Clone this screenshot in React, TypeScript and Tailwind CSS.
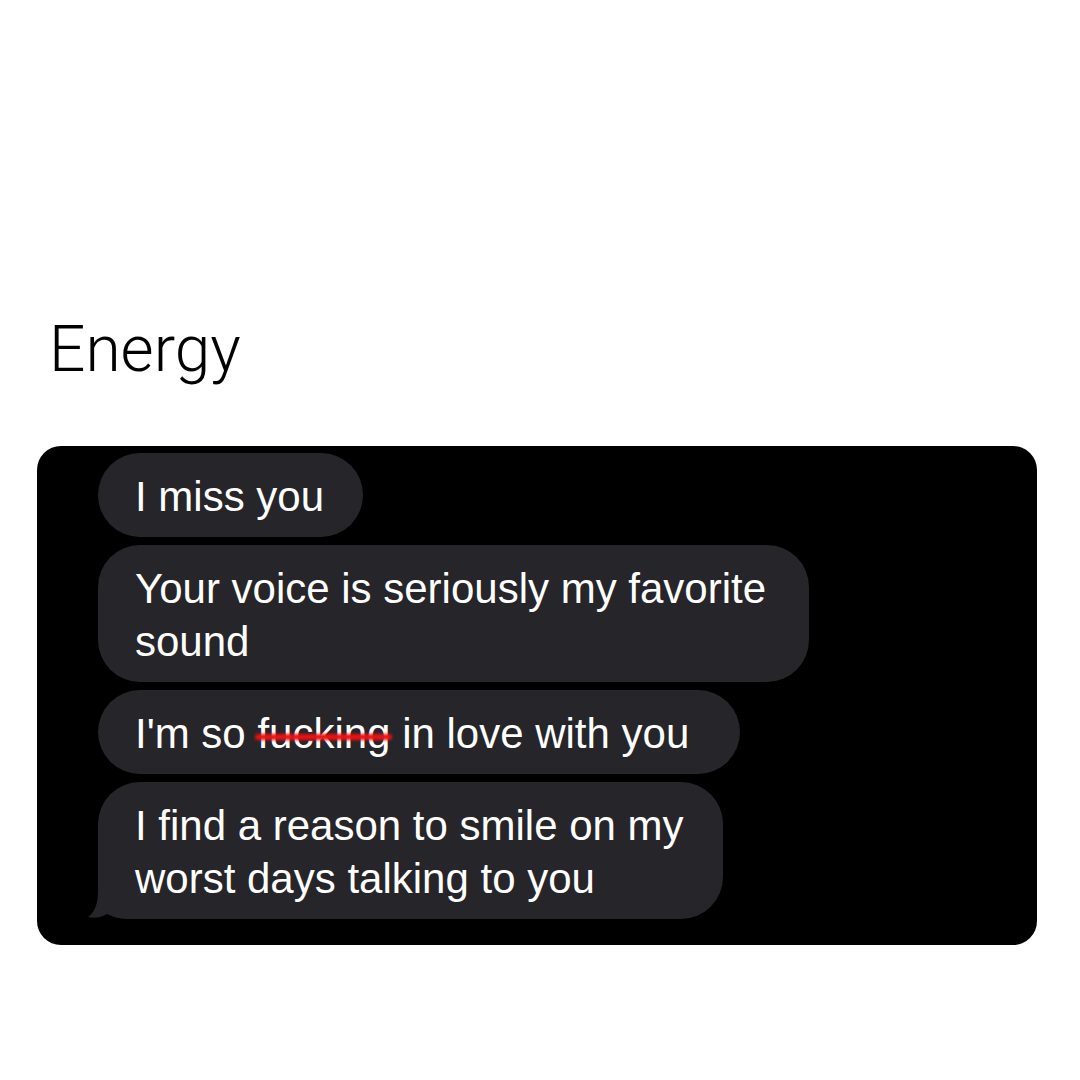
import React from 'react';

const bubble = 'relative rounded-[42px] bg-[#262529] pl-[37px] pt-[17px] pb-[14px] text-[42px] leading-[53px] text-white';

function Tail() {
  return (
    <svg
      className="absolute left-[-10px] bottom-0"
      width="60"
      height="46"
      viewBox="0 0 60 46"
    >
      <path
        d="M10 0 L10 18 C10 32 6 40 0 44 C7 46 14 44 19 41 C25 44 31 46 44 46 L60 46 L60 0 Z"
        fill="#262529"
      />
    </svg>
  );
}

export default function App() {
  return (
    <div className="min-h-[1080px] w-[1080px] bg-white" style={{ fontFamily: '"Liberation Sans", Arial, sans-serif' }}>
      <div className="pt-[318px] pl-[49px]">
        <h1 className="text-[64px] leading-none font-light text-black" style={{ fontFamily: 'Roboto, "Liberation Sans", sans-serif' }}>
          Energy
        </h1>
      </div>

      <div className="mt-[64px] ml-[37px] w-[1000px] rounded-[24px] bg-black pt-[7px] pb-[26px] pl-[61px]">
        <div className="flex flex-col gap-[8px]">
          <div className={`${bubble} w-[265px]`}>I miss you</div>
          <div className={`${bubble} w-[711px]`}>
            Your voice is seriously my favorite sound
          </div>
          <div className={`${bubble} w-[642px]`}>
            I'm so{' '}
            <span className="relative">
              fucking
              <span className="absolute left-[-2px] right-[-2px] top-[24px] h-[6px] rounded-full bg-[#f01010] blur-[1.5px]" />
            </span>{' '}
            in love with you
          </div>
          <div className={`${bubble} w-[625px]`}>
            <span className="relative z-10">I find a reason to smile on my worst days talking to you</span>
            <Tail />
          </div>
        </div>
      </div>
    </div>
  );
}
